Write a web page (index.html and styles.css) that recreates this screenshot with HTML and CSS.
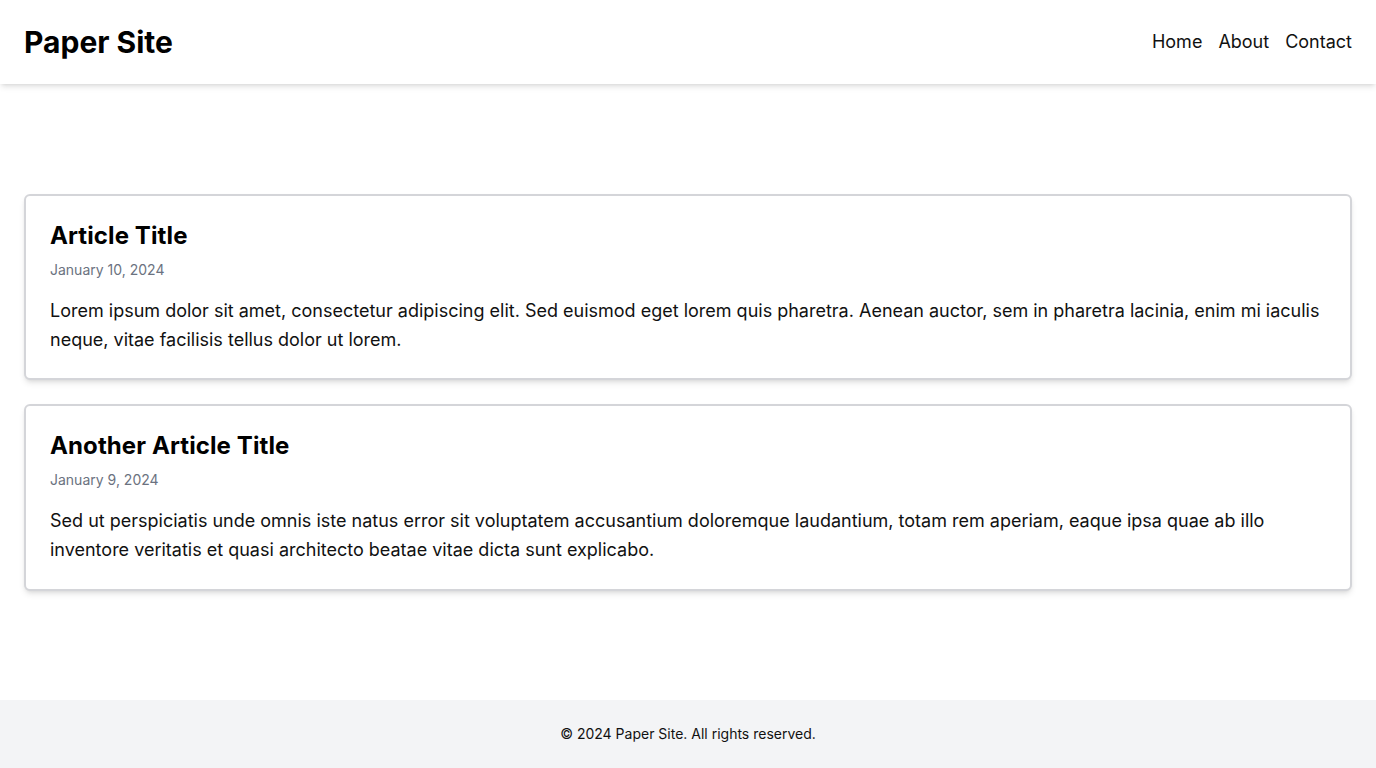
FILE: index.html
```html
<!DOCTYPE html>
<html lang="en">
<head>
<meta charset="utf-8">
<title>Paper Site</title>
<link rel="stylesheet" href="styles.css">
</head>
<body>
<div class="page">
  <header class="site-header">
    <h1 class="logo">Paper Site</h1>
    <nav class="nav">
      <a href="#">Home</a>
      <a href="#">About</a>
      <a href="#">Contact</a>
    </nav>
  </header>
  <main class="main">
    <article class="card">
      <h2 class="card-title">Article Title</h2>
      <p class="card-date">January 10, 2024</p>
      <p class="card-text">Lorem ipsum dolor sit amet, consectetur adipiscing elit. Sed euismod eget lorem quis pharetra. Aenean auctor, sem in pharetra lacinia, enim mi iaculis neque, vitae facilisis tellus dolor ut lorem.</p>
    </article>
    <article class="card">
      <h2 class="card-title">Another Article Title</h2>
      <p class="card-date">January 9, 2024</p>
      <p class="card-text">Sed ut perspiciatis unde omnis iste natus error sit voluptatem accusantium doloremque laudantium, totam rem aperiam, eaque ipsa quae ab illo inventore veritatis et quasi architecto beatae vitae dicta sunt explicabo.</p>
    </article>
  </main>
  <footer class="site-footer">
    <p>© 2024 Paper Site. All rights reserved.</p>
  </footer>
</div>
</body>
</html>
```

FILE: styles.css
```css
* { box-sizing: border-box; }
html, body { margin: 0; padding: 0; }
body {
  font-family: Inter, "Noto Sans", sans-serif;
  color: #000;
  background: #fff;
}
.page {
  min-height: 768px;
  display: flex;
  flex-direction: column;
}
.site-header {
  display: flex;
  justify-content: space-between;
  align-items: center;
  padding: 24px;
  background: #fff;
  box-shadow: 0 4px 6px -1px rgba(0,0,0,0.1), 0 2px 4px -2px rgba(0,0,0,0.1);
  position: relative;
  z-index: 1;
}
.logo {
  margin: 0;
  font-size: 30px;
  line-height: 36px;
  font-weight: 700;
}
.nav {
  display: flex;
  gap: 16px;
}
.nav a {
  color: #111;
  text-decoration: none;
  font-size: 18px;
  line-height: 28px;
}
.main {
  flex: 1;
  display: flex;
  flex-direction: column;
  justify-content: center;
  gap: 24px;
  padding: 24px;
}
.card {
  border: 2px solid #d4d5d9;
  border-radius: 6px;
  padding: 24px;
  background: #fff;
  box-shadow: 0 4px 6px -1px rgba(0,0,0,0.1), 0 2px 4px -2px rgba(0,0,0,0.1);
}
.card-title {
  margin: 0 0 8px;
  font-size: 24px;
  line-height: 32px;
  font-weight: 700;
  letter-spacing: 0.1px;
}
.card-date {
  margin: 0 0 16px;
  font-size: 14px;
  line-height: 20px;
  color: #6b7280;
}
.card-text {
  margin: 0;
  font-size: 18px;
  line-height: 29.25px;
  color: #111;
}
.site-footer {
  background: #f3f4f6;
  padding: 24px;
  text-align: center;
}
.site-footer p {
  margin: 0;
  font-size: 14px;
  line-height: 20px;
  color: #111;
}
```
